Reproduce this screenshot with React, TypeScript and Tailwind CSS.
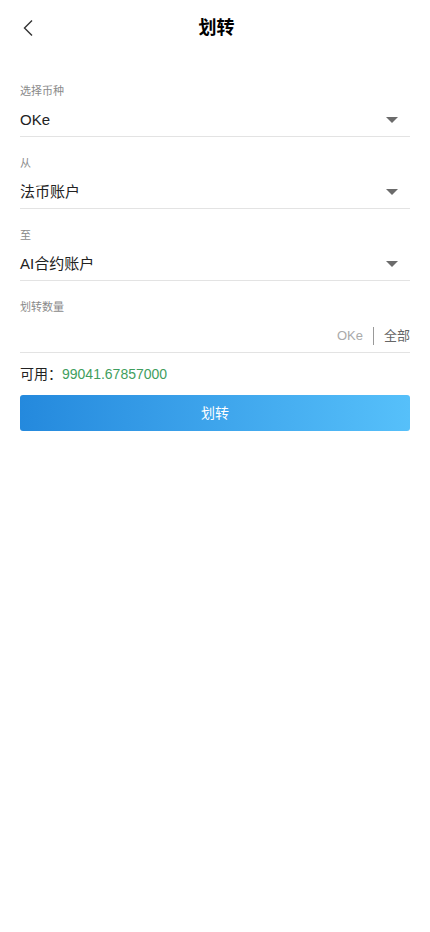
import React from "react";

const font = { fontFamily: '"Liberation Sans", Arial, "Noto Sans CJK SC", sans-serif' };

function Caret() {
  return (
    <svg width="12" height="6" viewBox="0 0 12 6" className="shrink-0">
      <path d="M0 0 H12 L6 6 Z" fill="#6b6b6b" />
    </svg>
  );
}

function SelectField({ label, value }: { label: string; value: string }) {
  return (
    <div className="pt-[18px]">
      <div className="h-4 text-[11px] leading-4 text-[#8a8a8a]">{label}</div>
      <div className="mt-[5px] flex h-[33px] items-center justify-between border-b border-[#e3e3e3] pr-3">
        <span className="text-[15px] text-[#222]">{value}</span>
        <Caret />
      </div>
    </div>
  );
}

export default function App() {
  return (
    <div className="min-h-[932px] w-full bg-white" style={font}>
      <div className="relative flex h-14 items-center justify-center">
        <button className="absolute left-[22px] top-[19px]">
          <svg width="12" height="18" viewBox="0 0 12 18">
            <path d="M10 1.5 L2.5 9 L10 16.5" fill="none" stroke="#333" strokeWidth="1.4" />
          </svg>
        </button>
        <h1 className="pl-[3px] text-[18px] font-bold text-black">划转</h1>
      </div>
      <div className="px-5 pt-[9px]">
        <SelectField label="选择币种" value="OKe" />
        <SelectField label="从" value="法币账户" />
        <SelectField label="至" value="AI合约账户" />
        <div className="pt-[18px]">
          <div className="h-4 text-[11px] leading-4 text-[#8a8a8a]">划转数量</div>
          <div className="mt-[5px] flex h-[33px] items-center justify-end border-b border-[#e3e3e3]">
            <span className="text-[13px] text-[#aaaaaa]">OKe</span>
            <span className="mx-[10px] h-[18px] w-px bg-[#999]" />
            <span className="text-[13px] text-[#666]">全部</span>
          </div>
        </div>
        <div className="mt-[11px] flex h-5 items-center text-[14px]">
          <span className="text-[#222]">可用：</span>
          <span className="text-[#3f9e5e]">99041.67857000</span>
        </div>
        <button className="mt-[11px] flex h-9 w-full items-center justify-center rounded-[3px] bg-gradient-to-r from-[#2489dd] to-[#56c0fa] text-[14px] text-white">
          划转
        </button>
      </div>
    </div>
  );
}
